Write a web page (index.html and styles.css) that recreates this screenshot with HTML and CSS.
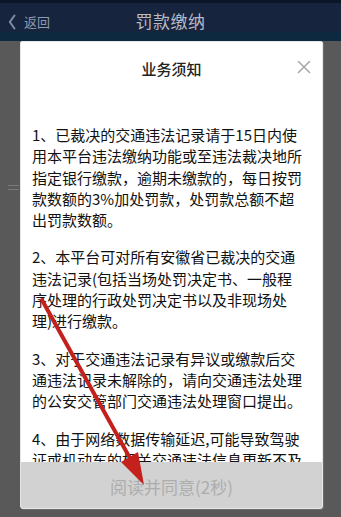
FILE: index.html
```html
<!DOCTYPE html>
<html lang="zh-CN">
<head>
<meta charset="utf-8">
<title>罚款缴纳</title>
<link rel="stylesheet" href="styles.css">
</head>
<body>
<div class="page">
  <header class="topbar">
    <div class="back">
      <svg class="chev" width="8" height="16" viewBox="0 0 8 16"><polyline points="6.5,1.5 1.8,8 6.5,14.5" fill="none" stroke="#7f8fa8" stroke-width="2" stroke-linecap="round" stroke-linejoin="round"/></svg>
      <span>返回</span>
    </div>
    <h1 class="title">罚款缴纳</h1>
  </header>
  <main class="stage">
    <span class="ghost-menu"></span>
    <section class="modal">
      <div class="modal-head">
        <h2 class="modal-title">业务须知</h2>
        <svg class="close" width="14" height="14" viewBox="0 0 14 14"><path d="M1.5 1.5 L12.5 12.5 M12.5 1.5 L1.5 12.5" stroke="#a9a9a9" stroke-width="1.6" stroke-linecap="round"/></svg>
      </div>
      <div class="modal-body">
        <p>1、已裁决的交通违法记录请于15日内使用本平台违法缴纳功能或至违法裁决地所指定银行缴款，逾期未缴款的，每日按罚款数额的3%加处罚款，处罚款总额不超出罚款数额。</p>
        <p>2、本平台可对所有安徽省已裁决的交通违法记录(包括当场处罚决定书、一般程序处理的行政处罚决定书以及非现场处理)进行缴款。</p>
        <p>3、对于交通违法记录有异议或缴款后交通违法记录未解除的，请向交通违法处理的公安交管部门交通违法处理窗口提出。</p>
        <p>4、由于网络数据传输延迟,可能导致驾驶证或机动车的相关交通违法信息更新不及时，请以公安交管部门的记录为准。</p>
      </div>
      <div class="modal-foot">阅读并同意(2秒)</div>
    </section>
  </main>
  <svg class="arrow" width="341" height="517" viewBox="0 0 341 517">
    <line x1="42" y1="300" x2="131" y2="460" stroke="#c4211d" stroke-width="4" stroke-linecap="round"/>
    <polygon points="144,485 121,462 138,452" fill="#c4211d"/>
  </svg>
</div>
</body>
</html>
```
FILE: styles.css
```css
* { box-sizing: border-box; }
html, body { margin: 0; padding: 0; }
body {
  width: 341px;
  height: 517px;
  overflow: hidden;
  background: #595959;
  font-family: "Noto Sans CJK SC", "Noto Sans", sans-serif;
}
.page {
  position: relative;
  width: 341px;
  height: 517px;
}
.topbar {
  position: relative;
  height: 41px;
  background: #17243e;
  border-top: 3px solid #0c1527;
  border-bottom: 9px solid #0d2940;
  display: flex;
  align-items: flex-end;
  justify-content: center;
  padding-bottom: 1px;
}
.back {
  position: absolute;
  left: 8px;
  bottom: 1px;
  display: flex;
  align-items: center;
  gap: 8px;
  color: #8c9ab0;
  font-size: 13px;
  line-height: 18px;
}
.chev { display: block; }
.title {
  margin: 0;
  font-size: 17px;
  line-height: 20px;
  font-weight: 400;
  color: #b7bac3;
  letter-spacing: 0.5px;
}
.stage {
  position: relative;
  height: 476px;
  padding: 0 18px 0 20px;
}
.ghost-menu {
  position: absolute;
  left: 8px;
  top: 144px;
  width: 11px;
  height: 5px;
  border-top: 1px solid #7a7a7a;
  border-bottom: 1px solid #7a7a7a;
}
.modal {
  width: 303px;
  height: 468px;
  background: #fff;
  border: 1px solid #e6e6e6;
  border-radius: 2px 2px 3px 3px;
  box-shadow: 1px 1px 0 #6d6d6d;
  display: flex;
  flex-direction: column;
  overflow: hidden;
}
.modal-head {
  position: relative;
  height: 54px;
  flex: none;
  display: flex;
  align-items: center;
  justify-content: center;
}
.modal-title {
  margin: 0;
  font-size: 15px;
  font-weight: 500;
  color: #222;
  line-height: 20px;
}
.close {
  position: absolute;
  right: 11px;
  top: 18px;
}
.modal-body {
  flex: 1;
  overflow: hidden;
  padding: 28px 0 0 11px;
}
.modal-body p {
  width: 272px;
  margin: 0 0 16px;
  font-size: 15px;
  line-height: 21.3px;
  color: #111;
}
.modal-foot {
  flex: none;
  height: 46px;
  background: #d2d2d2;
  color: #adadad;
  font-size: 17px;
  display: flex;
  align-items: center;
  justify-content: center;
  padding-top: 2px;
}
.arrow {
  position: absolute;
  left: 0;
  top: 0;
  pointer-events: none;
}
```
